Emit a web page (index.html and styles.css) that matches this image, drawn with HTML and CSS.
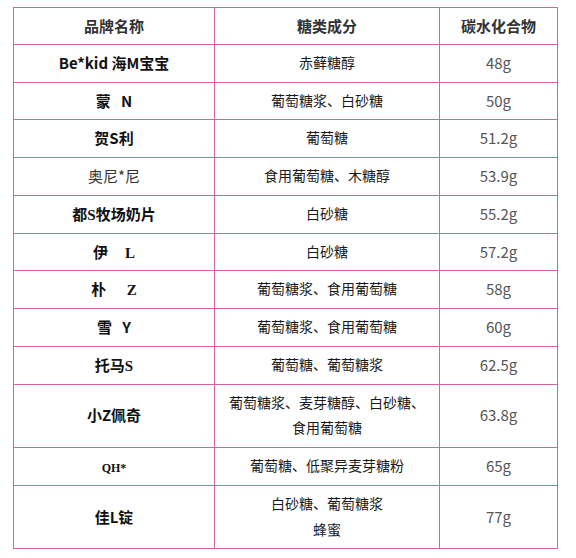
FILE: index.html
```html
<!DOCTYPE html>
<html lang="zh">
<head>
<meta charset="utf-8">
<link rel="stylesheet" href="styles.css">
</head>
<body>
<table class="sugar-table">
  <colgroup>
    <col class="c1"><col class="c2"><col class="c3">
  </colgroup>
  <thead>
    <tr class="head"><th>品牌名称</th><th>糖类成分</th><th>碳水化合物</th></tr>
  </thead>
  <tbody>
    <tr><td class="brand">Be*kid 海M宝宝</td><td class="sugar">赤藓糖醇</td><td class="num">48g</td></tr>
    <tr><td class="brand">蒙&nbsp;&nbsp;&nbsp;N</td><td class="sugar">葡萄糖浆、白砂糖</td><td class="num">50g</td></tr>
    <tr><td class="brand">贺S利</td><td class="sugar">葡萄糖</td><td class="num">51.2g</td></tr>
    <tr><td class="brand light">奥尼*尼</td><td class="sugar">食用葡萄糖、木糖醇</td><td class="num">53.9g</td></tr>
    <tr><td class="brand">都<span class="serif">S</span>牧场奶片</td><td class="sugar">白砂糖</td><td class="num">55.2g</td></tr>
    <tr><td class="brand">伊&nbsp;&nbsp;&nbsp;&nbsp;&nbsp;<span class="serif">L</span></td><td class="sugar">白砂糖</td><td class="num">57.2g</td></tr>
    <tr><td class="brand">朴&nbsp;&nbsp;&nbsp;&nbsp;&nbsp;&nbsp;<span class="serif">Z</span></td><td class="sugar">葡萄糖浆、食用葡萄糖</td><td class="num">58g</td></tr>
    <tr><td class="brand">雪&nbsp;&nbsp;&nbsp;Y</td><td class="sugar">葡萄糖浆、食用葡萄糖</td><td class="num">60g</td></tr>
    <tr><td class="brand">托马<span class="serif">S</span></td><td class="sugar">葡萄糖、葡萄糖浆</td><td class="num">62.5g</td></tr>
    <tr class="tall"><td class="brand">小Z佩奇</td><td class="sugar">葡萄糖浆、麦芽糖醇、白砂糖、<br>食用葡萄糖</td><td class="num">63.8g</td></tr>
    <tr><td class="brand"><span class="serif small">QH*</span></td><td class="sugar">葡萄糖、低聚异麦芽糖粉</td><td class="num">65g</td></tr>
    <tr class="tall"><td class="brand">佳L锭</td><td class="sugar">白砂糖、葡萄糖浆<br>蜂蜜</td><td class="num">77g</td></tr>
  </tbody>
</table>
</body>
</html>
```
FILE: styles.css
```css
html, body {
  margin: 0;
  background: #ffffff;
}
body {
  padding: 7px 0 0 13px;
  font-family: "Noto Sans CJK SC", "Noto Sans", sans-serif;
}
.sugar-table {
  border-collapse: collapse;
  table-layout: fixed;
  width: 544px;
}
.c1 { width: 201px; }
.c2 { width: 225px; }
.c3 { width: 118px; }
.sugar-table th,
.sugar-table td {
  border: 1px solid #cf66a0;
  text-align: center;
  vertical-align: middle;
  padding: 5px 4px 6px;
  line-height: 25.75px;
}
.sugar-table th {
  font-size: 15px;
  font-weight: bold;
  color: #333333;
  padding: 5px 4px 5px;
}
.brand {
  font-size: 15px;
  font-weight: bold;
  color: #111111;
}
.brand.light {
  font-weight: normal;
  color: #333333;
}
.serif {
  font-family: "Liberation Serif", "DejaVu Serif", serif;
  font-weight: bold;
  line-height: 1;
}
.serif.small {
  font-size: 12px;
}
.sugar {
  font-size: 14px;
  color: #1a1a1a;
}
.num {
  font-size: 15px;
  color: #555555;
}
```
